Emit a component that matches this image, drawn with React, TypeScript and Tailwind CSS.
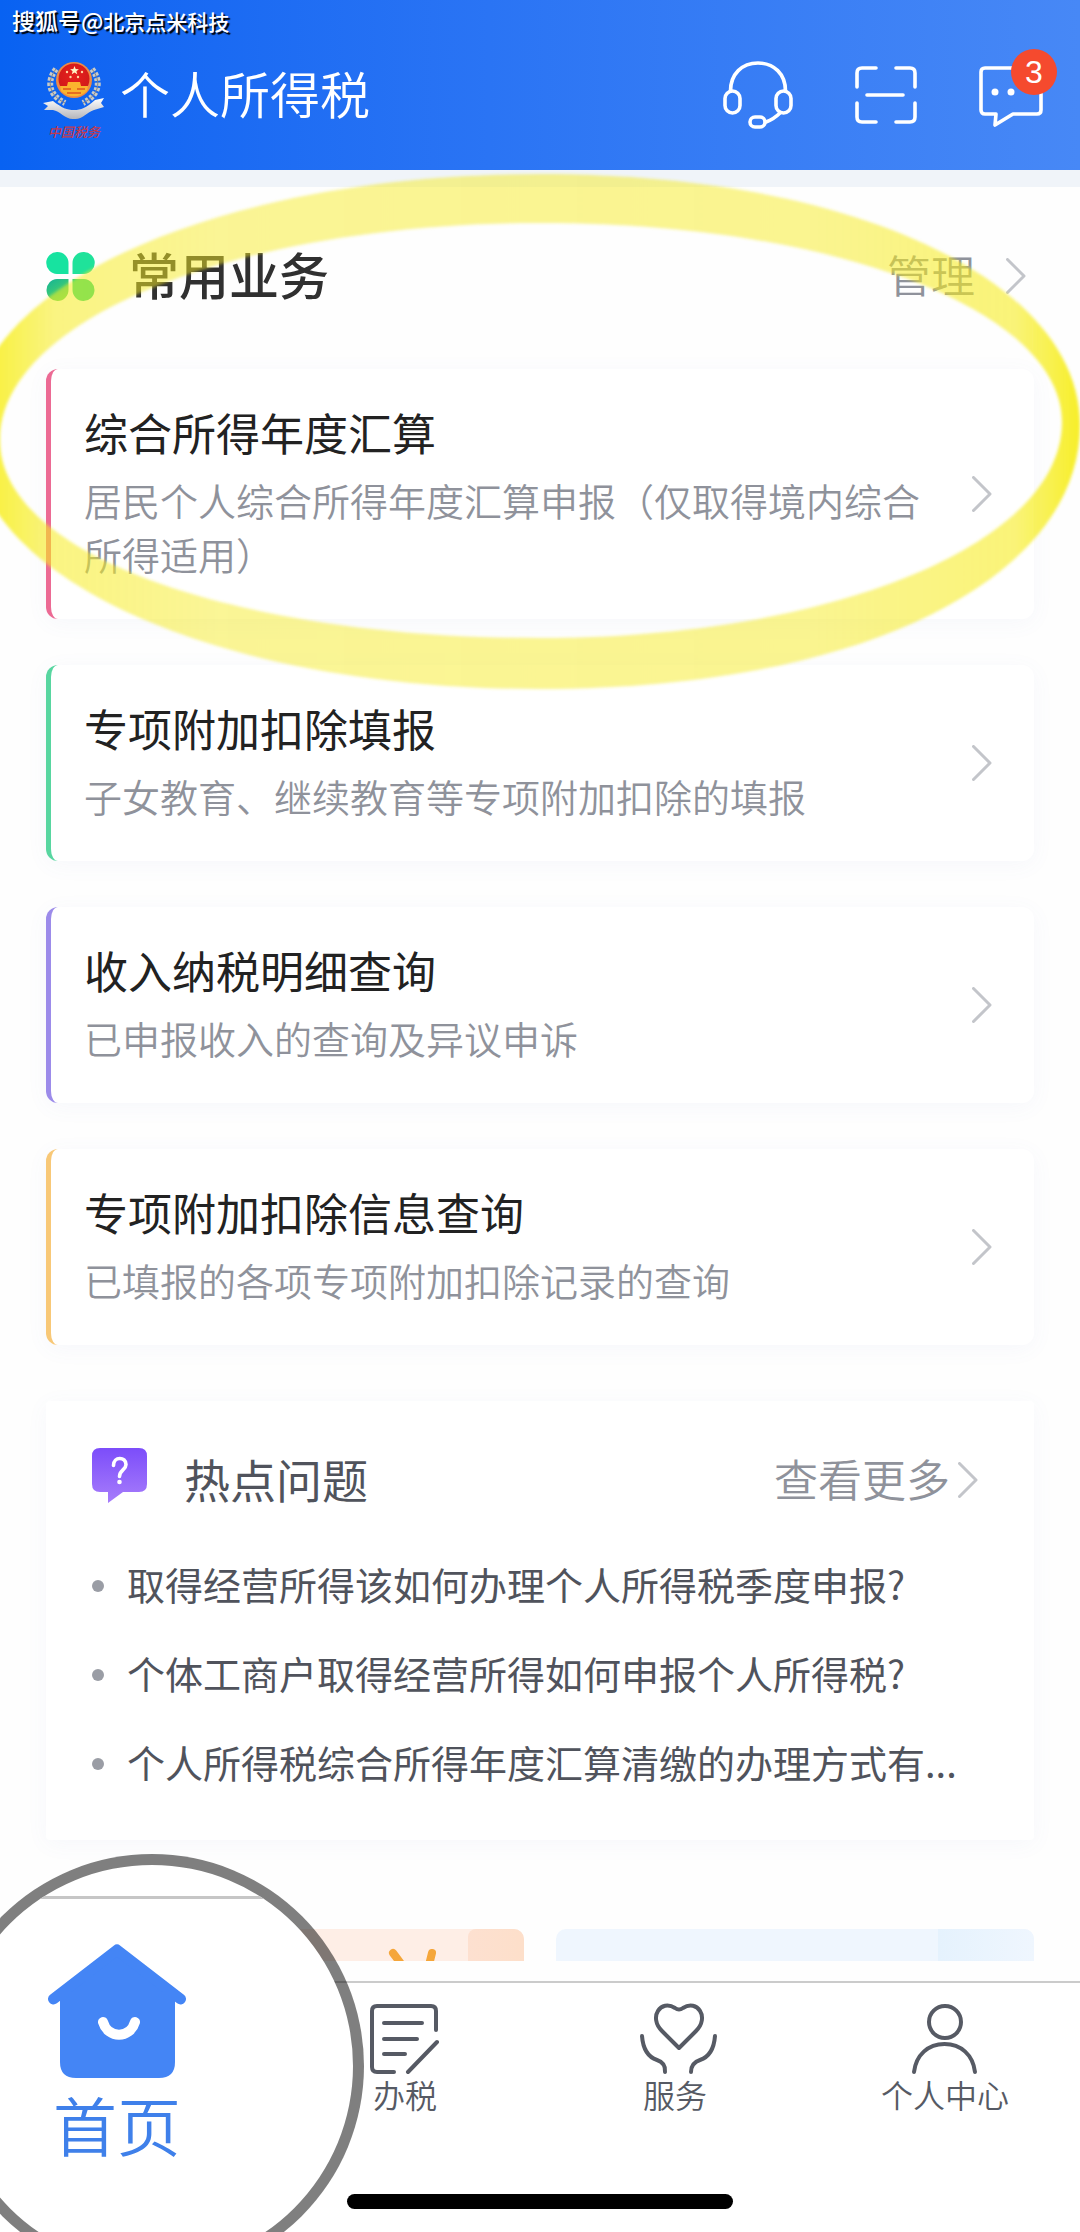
import type { ReactNode } from 'react'

interface Service {
  title: string
  desc: string
  border: string
}

const services: Service[] = [
  {
    title: '综合所得年度汇算',
    desc: '居民个人综合所得年度汇算申报（仅取得境内综合所得适用）',
    border: 'border-[#ec6a94]',
  },
  {
    title: '专项附加扣除填报',
    desc: '子女教育、继续教育等专项附加扣除的填报',
    border: 'border-[#58d6a0]',
  },
  {
    title: '收入纳税明细查询',
    desc: '已申报收入的查询及异议申诉',
    border: 'border-[#9c8bea]',
  },
  {
    title: '专项附加扣除信息查询',
    desc: '已填报的各项专项附加扣除记录的查询',
    border: 'border-[#f8c877]',
  },
]

const questions = [
  '取得经营所得该如何办理个人所得税季度申报?',
  '个体工商户取得经营所得如何申报个人所得税?',
  '个人所得税综合所得年度汇算清缴的办理方式有...',
]

function Chevron() {
  return (
    <svg viewBox="0 0 20 36" className="h-9 w-5 shrink-0" fill="none" stroke="#c3c5ca" strokeWidth="3" aria-hidden="true">
      <path d="M1.5 1.5 L18 18 L1.5 34.5" strokeLinecap="round" strokeLinejoin="round" />
    </svg>
  )
}

function TaxEmblem() {
  return (
    <svg viewBox="0 0 72 98" className="h-[98px] w-[72px] shrink-0" role="img" aria-label="中国税务">
      <defs>
        <linearGradient id="ribbon" x1="0" y1="0" x2="0" y2="1">
          <stop offset="0" stopColor="#ffffff" />
          <stop offset="1" stopColor="#b4b4ba" />
        </linearGradient>
        <radialGradient id="disc" cx=".5" cy=".4" r=".6">
          <stop offset="0" stopColor="#e8201c" />
          <stop offset="1" stopColor="#cf1a1a" />
        </radialGradient>
      </defs>
      {/* wheat ears */}
      <g fill="none" stroke="#c9cbc8" strokeWidth="6" strokeDasharray="3.2 1.8">
        <path d="M16 23 C6 36 9 49 25 57" />
        <path d="M52 23 C62 36 59 49 43 57" />
      </g>
      <g fill="none" stroke="#7d808a" strokeWidth="1">
        <path d="M16 23 C6 36 9 49 25 57" />
        <path d="M52 23 C62 36 59 49 43 57" />
      </g>
      <circle cx="34" cy="34" r="18" fill="#ee8a45" />
      <circle cx="34" cy="33" r="15.5" fill="url(#disc)" />
      <path d="M34.500 20 l1.200 3 3.200 .2 -2.500 2 .8 3.100 -2.700 -1.700 -2.700 1.700 .8 -3.100 -2.500 -2 3.200 -.2z" fill="#fff3c4" />
      <g fill="#ffd3a0">
        <circle cx="27" cy="26" r="1.200" />
        <circle cx="42" cy="26" r="1.200" />
        <circle cx="30.500" cy="31" r="1.200" />
        <circle cx="38" cy="31" r="1.200" />
      </g>
      <path d="M28 36 h12 l1 4 h7 l-1 5 c-7 7 -19 7 -26 0 l-1 -5 h7z" fill="#fbb52e" />
      <path d="M23 43 h8 m6 0 h8 M27 47 h14" stroke="#e0561f" strokeWidth="1.400" />
      <path d="M3 57 L13 55 C22 62 27 64 34 64 C41 64 46 62 55 54 L64 52 L61 57 L64 61 L54 64 C47 66 42 74 34 73 C26 74 20 65 13 64 L4 64 L8 60z" fill="url(#ribbon)" />
      <text
        x="34"
        y="91"
        textAnchor="middle"
        fontSize="13"
        fontStyle="italic"
        fontWeight="500"
        fill="#c23a50"
        fontFamily="Noto Sans CJK SC, sans-serif"
      >
        中国税务
      </text>
    </svg>
  )
}

function HeaderIcon({ children }: { children: ReactNode }) {
  return (
    <svg
      viewBox="0 0 72 72"
      className="size-[72px]"
      fill="none"
      stroke="#fff"
      strokeWidth="3.6"
      strokeLinecap="round"
      strokeLinejoin="round"
      aria-hidden="true"
    >
      {children}
    </svg>
  )
}

function Header() {
  return (
    <header className="relative flex h-[170px] items-center justify-between bg-linear-to-r from-[#0862f2] to-[#4788f6] pt-5 pr-[31px] pl-10">
      <p className="absolute top-0.5 left-3 text-[21px] leading-9 font-medium text-white [text-shadow:2px_2px_1px_#000]">
        <span className="text-[23px]">搜狐号@</span>北京点米科技
      </p>
      <div className="flex items-center gap-2">
        <TaxEmblem />
        <h1 className="pb-1.5 text-[50px] leading-[72px] font-[350] text-white">个人所得税</h1>
      </div>
      <div className="flex items-center gap-14">
        <button type="button" aria-label="客服">
          <HeaderIcon>
            <path d="M9.500 32 C9.500 15 21 4 37 4 S64.500 15 64.500 32" />
            <rect x="4" y="32" width="15" height="22" rx="7.500" />
            <rect x="55" y="32" width="15" height="22" rx="7.500" />
            <rect x="29" y="58" width="15" height="10" rx="5" />
            <path d="M45 63 Q53 60 59 54" />
          </HeaderIcon>
        </button>
        <button type="button" aria-label="扫一扫">
          <HeaderIcon>
            <path d="M8 28 V14 Q8 9 13 9 H27" />
            <path d="M47 9 H61 Q66 9 66 14 V28" />
            <path d="M8 44 V58 Q8 63 13 63 H27" />
            <path d="M47 63 H61 Q66 63 66 58 V44" />
            <path d="M18 36 H54" />
          </HeaderIcon>
        </button>
        <button type="button" aria-label="消息" className="relative">
          <HeaderIcon>
            <path d="M8 9 H60 Q64 9 64 13 V51 Q64 55 60 55 H36 L18 66 L19 55 H8 Q4 55 4 51 V13 Q4 9 8 9z" />
            <circle cx="18" cy="33" r="3.500" fill="#fff" stroke="none" />
            <circle cx="34" cy="33" r="3.500" fill="#fff" stroke="none" />
          </HeaderIcon>
          <span className="absolute -top-2.5 -right-2 flex size-[46px] items-center justify-center rounded-full bg-[#f54a2e] font-['Liberation_Sans',sans-serif] text-[32px] leading-none text-white">
            3
          </span>
        </button>
      </div>
    </header>
  )
}

function CloverIcon() {
  return (
    <svg viewBox="0 0 49 49" className="size-[49px]" aria-hidden="true">
      <defs>
        <linearGradient id="petal" x1="0" y1="0" x2=".6" y2="1">
          <stop offset="0" stopColor="#14b396" />
          <stop offset="1" stopColor="#4fd667" />
        </linearGradient>
      </defs>
      <path d="M11.500 0 A11 11 0 0 1 22.500 11 V22 H11 A11 11 0 0 1 11.500 0z" fill="#17e3a0" />
      <path d="M37.500 0 A11 11 0 0 1 38 22 H26.500 V11 A11 11 0 0 1 37.500 0z" fill="#1fe29a" />
      <path d="M11 27 H22.500 V38 A11 11 0 1 1 11 27z" fill="url(#petal)" />
      <path d="M26.500 27 H38 A11 11 0 1 1 26.500 38z" fill="#1fd87f" />
    </svg>
  )
}

function QuestionIcon() {
  return (
    <svg viewBox="0 0 55 55" className="size-[55px] self-start" aria-hidden="true">
      <defs>
        <linearGradient id="bubble" x1="0" y1="0" x2="0" y2="1">
          <stop offset="0" stopColor="#7c4dfa" />
          <stop offset="1" stopColor="#a77dfb" />
        </linearGradient>
      </defs>
      <path d="M8 0 H47 Q55 0 55 8 V36 Q55 44 47 44 H31 L16 55 V44 H8 Q0 44 0 36 V8 Q0 0 8 0z" fill="url(#bubble)" />
      <path d="M21.500 17.500 C21.500 8 34 8.500 34 16.500 C34 22 27.500 22 27.500 28.500" fill="none" stroke="#fff" strokeWidth="3.600" strokeLinecap="round" />
      <circle cx="27.500" cy="34" r="2.300" fill="#fff" />
    </svg>
  )
}

/* Highlighter ring round the first service */
function Highlight() {
  return (
    <svg
      viewBox="0 170 1080 530"
      preserveAspectRatio="none"
      className="pointer-events-none absolute inset-x-0 top-0 h-[530px] w-full"
      aria-hidden="true"
    >
      <defs>
        <linearGradient id="marker" gradientUnits="userSpaceOnUse" x1="0" y1="0" x2="1080" y2="0">
          <stop offset="0" stopColor="#f7ee1c" stopOpacity=".8" />
          <stop offset=".05" stopColor="#f6ec20" stopOpacity=".56" />
          <stop offset=".2" stopColor="#f5eb20" stopOpacity=".48" />
          <stop offset=".75" stopColor="#f5eb20" stopOpacity=".5" />
          <stop offset=".94" stopColor="#f6ec20" stopOpacity=".6" />
          <stop offset="1" stopColor="#f7ee1c" stopOpacity=".95" />
        </linearGradient>
        <filter id="soft">
          <feGaussianBlur stdDeviation="1.500" />
        </filter>
      </defs>
      <path
        fill="url(#marker)"
        fillRule="evenodd"
        filter="url(#soft)"
        d="M540 174 C864 174 1080 285 1080 425 C1080 575 870 689 540 689 C220 689 -30 580 -30 430 C-30 280 230 174 540 174z
           M540 223 C840 223 1062 312 1062 422 C1062 545 830 638 540 638 C250 638 0 560 0 440 C0 318 240 223 540 223z"
      />
    </svg>
  )
}

function ServiceCard({ service }: { service: Service }) {
  return (
    <a
      href="#"
      className={`flex items-center justify-between rounded-xl border-l-[5px] bg-white pr-[42px] pl-[33px] shadow-[0_4px_22px_rgba(90,110,200,0.05)] ${service.border}`}
    >
      <div className="max-w-[860px] pt-[34px] pb-[38px]">
        <h3 className="text-[44px] leading-[58px] text-[#222]">{service.title}</h3>
        <p className="mt-3 text-[38px] leading-[54px] font-[350] text-[#8f929b]">{service.desc}</p>
      </div>
      <Chevron />
    </a>
  )
}

function HotQuestions() {
  return (
    <section className="mt-14 rounded-sm bg-white px-[46px] pt-[47px] pb-8 shadow-[0_4px_22px_rgba(90,110,200,0.05)]">
      <div className="flex h-16 items-center">
        <QuestionIcon />
        <h2 className="ml-[37px] pb-1 text-[46px] leading-[60px] text-[#50535c]">热点问题</h2>
        <a href="#" className="mr-2.5 ml-auto flex items-center gap-2 text-[44px] leading-[60px] font-[350] text-[#8f929b]">
          <span className="pb-1">查看更多</span>
          <Chevron />
        </a>
      </div>
      <ul className="mt-[29px]">
        {questions.map((question) => (
          <li key={question}>
            <a href="#" className="flex items-center gap-[23px] text-[38px] leading-[85px] text-[#50535c]">
              <span className="size-3 shrink-0 rounded-full bg-[#9a9da5]" />
              <span className="pb-1">{question}</span>
            </a>
          </li>
        ))}
      </ul>
    </section>
  )
}

function Banners() {
  return (
    <div className="mt-[89px] grid h-8 grid-cols-2 gap-8 overflow-hidden">
      <div className="flex justify-end overflow-hidden rounded-t-[10px] bg-[#feeee6]">
        <svg viewBox="0 0 60 32" className="mr-[25px] h-8 w-[60px]" stroke="#f5a63a" strokeWidth="8" strokeLinecap="round" aria-hidden="true">
          <path d="M10 24 L19 36 M49 24 L46 36" />
        </svg>
        <div className="w-14 rounded-tl-lg bg-linear-to-r from-[#fde0d0] to-[#fddfca]" />
      </div>
      <div className="flex justify-end overflow-hidden rounded-t-[10px] bg-[#eff6fe]">
        <div className="w-24 bg-linear-to-r from-[#e5f2fd] to-[#eff6fe]" />
      </div>
    </div>
  )
}

function Tab({ label, children }: { label: string; children: ReactNode }) {
  return (
    <button type="button" className="flex flex-col items-center text-[#565a64]">
      <svg
        viewBox="0 0 72 72"
        className="size-[72px] overflow-visible"
        fill="none"
        stroke="currentColor"
        strokeWidth="4"
        strokeLinecap="round"
        strokeLinejoin="round"
        aria-hidden="true"
      >
        {children}
      </svg>
      <span className="text-[32px] leading-[38px] font-[350]">{label}</span>
    </button>
  )
}

/* Current tab, shown enlarged in a lens over the bar */
function HomeLens() {
  return (
    <button
      type="button"
      className="absolute -top-[129px] -left-[60px] flex size-[424px] flex-col items-center overflow-hidden rounded-full border-[11px] border-black/50 bg-white bg-clip-padding"
    >
      <span className="mt-[31px] h-[3px] w-full shrink-0 bg-[#c6c6c6]" />
      <span className="mt-[45px] mr-[70px] flex flex-col items-center">
        <svg viewBox="0 0 138 134" className="h-[134px] w-[138px]" aria-hidden="true">
          <path d="M5.500 55 L69 6 L132.500 55" fill="#4485f5" stroke="#4485f5" strokeWidth="11" strokeLinecap="round" strokeLinejoin="round" />
          <path d="M12 48 H127 V118 Q127 134 111 134 H28 Q12 134 12 118z" fill="#4485f5" />
          <path d="M55 78 C60 95 82 95 87 78" fill="none" stroke="#fff" strokeWidth="10" strokeLinecap="round" />
        </svg>
        <span className="mt-1.5 text-[64px] leading-[78px] font-[350] text-[#3f80ea]">首页</span>
      </span>
    </button>
  )
}

function TabBar() {
  return (
    <nav className="relative mt-auto border-t-2 border-[#cbcbcb] bg-white pb-[23px]">
      <div className="grid grid-cols-4 pt-5">
        <div>
          <HomeLens />
        </div>
        <Tab label="办税">
          <path d="M25 69 H8 Q3 69 3 64 V8 Q3 3 8 3 H62 Q67 3 67 8 V27" />
          <path d="M15 20 H53 M15 36 H48 M15 51 H36 M39 69 L68 39" />
        </Tab>
        <Tab label="服务">
          <path d="M40 45 L23 28 C9 14 22 -4 36 5 Q40 8 44 5 C58 -4 71 14 57 28z" />
          <path d="M3 33 C4 46 9 54 18 57 Q27 60 26 69" />
          <path d="M76 33 C75 46 70 54 61 57 Q52 60 52 69" />
        </Tab>
        <Tab label="个人中心">
          <circle cx="36" cy="19" r="16" />
          <path d="M5 69 C7 52 19 41 35.500 41 S64 52 66 69" />
        </Tab>
      </div>
      <div className="mx-auto mt-[81px] h-[15px] w-[386px] rounded-full bg-black" />
    </nav>
  )
}

export default function App() {
  return (
    <div className="relative flex min-h-screen flex-col overflow-hidden bg-[#fefefe] font-['Noto_Sans_CJK_SC',sans-serif]">
      <Header />
      <main className="relative border-t-[17px] border-[#f0f4f9]">
        <div className="px-[46px] pt-[53px] pb-5">
          <div className="flex h-[72px] items-center">
            <CloverIcon />
            <h2 className="ml-[34px] pb-1.5 text-[50px] leading-[66px] font-medium text-[#303030]">常用业务</h2>
            <a href="#" className="mr-2 ml-auto flex items-center gap-[31px] text-[44px] leading-[60px] font-[350] text-[#8f929b]">
              <span className="pb-1">管理</span>
              <Chevron />
            </a>
          </div>
          <div className="mt-[57px] flex flex-col gap-[46px]">
            {services.map((service) => (
              <ServiceCard key={service.title} service={service} />
            ))}
          </div>
          <HotQuestions />
          <Banners />
        </div>
        <div className="absolute inset-x-0 -top-[17px]">
          <Highlight />
        </div>
      </main>
      <TabBar />
    </div>
  )
}
